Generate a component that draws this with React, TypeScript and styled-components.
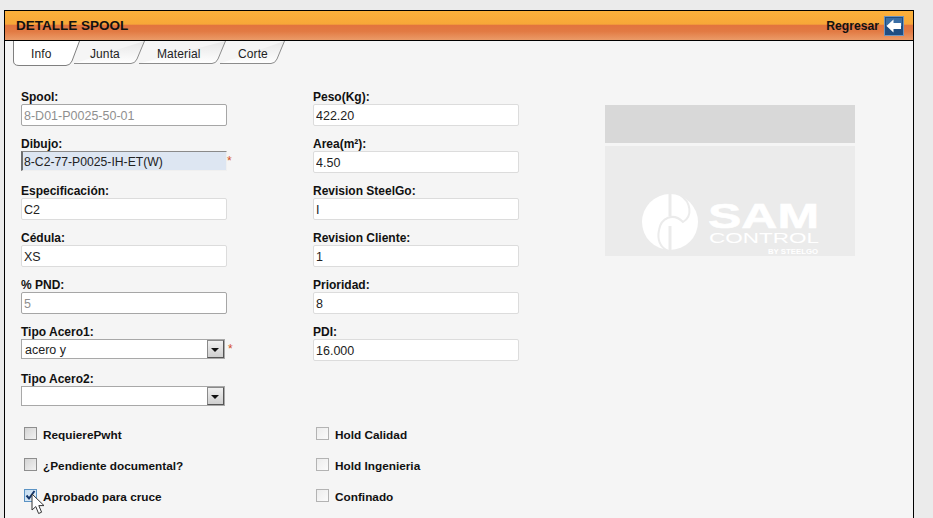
import { createGlobalStyle } from "styled-components";
import styled from "styled-components";

const GlobalStyle = createGlobalStyle`
  html, body {
    margin: 0;
    height: 518px;
    overflow: hidden;
    background: #ebebeb;
    font-family: "Liberation Sans", Arial, sans-serif;
  }
`;

const leftFields = [
  { label: "Spool:", value: "8-D01-P0025-50-01", disabled: true },
  { label: "Dibujo:", value: "8-C2-77-P0025-IH-ET(W)", focused: true, required: true },
  { label: "Especificación:", value: "C2" },
  { label: "Cédula:", value: "XS" },
  { label: "% PND:", value: "5", disabled: true },
];

const rightFields = [
  { label: "Peso(Kg):", value: "422.20" },
  { label: "Area(m²):", value: "4.50" },
  { label: "Revision SteelGo:", value: "I" },
  { label: "Revision Cliente:", value: "1" },
  { label: "Prioridad:", value: "8" },
  { label: "PDI:", value: "16.000" },
];

type TabInfo = { name: string; width: number; inset: number; active?: boolean };
const tabs: TabInfo[] = [
  { name: "Info", width: 67, inset: 18, active: true },
  { name: "Junta", width: 73, inset: 18 },
  { name: "Material", width: 89, inset: 20 },
  { name: "Corte", width: 67, inset: 20 },
];

const TabShape = ({ width, active }: { width: number; active?: boolean }) => {
  const bottom = active ? 25 : 23;
  const left = active
    ? `M0.5 0 V${bottom - 5} Q0.5 ${bottom - 0.5} 6 ${bottom - 0.5}`
    : `M2 ${bottom - 0.5} H6`;
  const d = `${left} H${width - 14} Q${width - 10} ${bottom - 0.5} ${width - 8} ${bottom - 5} L${width - 0.5} 0`;
  return (
    <TabSvg width={width} height={25} viewBox={`0 0 ${width} 25`}>
      <defs>
        <linearGradient id="tabOff" x1="0" y1="0" x2="0" y2="1">
          <stop offset="0" stopColor="#e6e6e6" />
          <stop offset="1" stopColor="#ffffff" />
        </linearGradient>
      </defs>
      <path d={`${d} Z`} fill={active ? "#ffffff" : "url(#tabOff)"} stroke="none" />
      <path d={d} fill="none" stroke={active ? "#7f7f7f" : "#8c8c8c"} strokeWidth="1" />
    </TabSvg>
  );
};

const App = () => {
  return (
    <>
      <GlobalStyle />
      <Panel>
        <Header>
          <Title>DETALLE SPOOL</Title>
          <BackLink>
            Regresar
            <BackIcon width="20" height="20" viewBox="0 0 20 20">
              <rect x="0.5" y="0.5" width="19" height="19" fill="#1f4d82" stroke="#6f94bd" />
              <rect x="2" y="2" width="16" height="8" fill="#3a6ea5" />
              <path d="M2.5 10 L9.5 3.5 V7 H17 V13 H9.5 V16.5 Z" fill="#ffffff" />
            </BackIcon>
          </BackLink>
        </Header>
        <TabStrip>
          {tabs.map((tab) => (
            <Tab key={tab.name} $width={tab.width} $active={tab.active}>
              <TabShape width={tab.width} active={tab.active} />
              <TabLabel $inset={tab.inset}>{tab.name}</TabLabel>
            </Tab>
          ))}
        </TabStrip>
        <Content>
          <Column>
            {leftFields.map((f) => (
              <Field key={f.label}>
                <Label>{f.label}</Label>
                <InputRow>
                  <TextInput
                    readOnly
                    value={f.value}
                    $disabled={f.disabled}
                    $focused={f.focused}
                  />
                  {f.required && <Required>*</Required>}
                </InputRow>
              </Field>
            ))}
            <Field>
              <Label>Tipo Acero1:</Label>
              <InputRow>
                <Combo>
                  <ComboText>acero y</ComboText>
                  <ComboButton />
                </Combo>
                <Required $gap={3}>*</Required>
              </InputRow>
            </Field>
            <Field>
              <Label>Tipo Acero2:</Label>
              <InputRow>
                <Combo>
                  <ComboText />
                  <ComboButton />
                </Combo>
              </InputRow>
            </Field>
            <Checks>
              <CheckRow>
                <CheckBox />
                <CheckLabel>RequierePwht</CheckLabel>
              </CheckRow>
              <CheckRow>
                <CheckBox />
                <CheckLabel>¿Pendiente documental?</CheckLabel>
              </CheckRow>
              <CheckRow>
                <CheckBox $checked>
                  <svg width="13" height="13" viewBox="0 0 13 13">
                    <path d="M2.5 6.5 L5 9.5 L10.5 2" fill="none" stroke="#15366b" strokeWidth="2" />
                  </svg>
                </CheckBox>
                <CheckLabel>Aprobado para cruce</CheckLabel>
                <Cursor width="18" height="24" viewBox="0 0 18 24">
                  <path
                    d="M1 1 V17 L4.8 13.6 L7.6 20.5 L10.6 19.2 L7.8 12.6 H13 Z"
                    fill="#ffffff"
                    stroke="#333333"
                    strokeWidth="1"
                  />
                </Cursor>
              </CheckRow>
            </Checks>
          </Column>
          <Column>
            {rightFields.map((f) => (
              <Field key={f.label}>
                <Label>{f.label}</Label>
                <InputRow>
                  <TextInput readOnly value={f.value} />
                </InputRow>
              </Field>
            ))}
            <RightChecks>
              <CheckRow>
                <CheckBox $plain />
                <CheckLabel>Hold Calidad</CheckLabel>
              </CheckRow>
              <CheckRow>
                <CheckBox $plain />
                <CheckLabel>Hold Ingenieria</CheckLabel>
              </CheckRow>
              <CheckRow>
                <CheckBox $plain />
                <CheckLabel>Confinado</CheckLabel>
              </CheckRow>
            </RightChecks>
          </Column>
          <Picture>
            <PictureTop />
            <Logo width="250" height="110" viewBox="0 0 250 110">
              <circle cx="65" cy="76" r="28" fill="#ffffff" />
              <path d="M65 47 V70 M65 80 V105" stroke="#ebebeb" strokeWidth="3" />
              <path
                d="M75 49 C86 56 88 70 78 76 C68 66 56 72 54 84 C52 94 55 101 63 105"
                fill="none"
                stroke="#ebebeb"
                strokeWidth="2"
              />
              <text
                x="103"
                y="82"
                fill="#ffffff"
                stroke="#ffffff"
                strokeWidth="0.6"
                fontFamily="Liberation Sans, Arial, sans-serif"
                fontWeight="700"
                fontSize="35"
                textLength="111"
                lengthAdjust="spacingAndGlyphs"
              >
                SAM
              </text>
              <text
                x="104"
                y="97"
                fill="#ffffff"
                fontFamily="Liberation Sans, Arial, sans-serif"
                fontSize="15"
                textLength="110"
                lengthAdjust="spacingAndGlyphs"
              >
                CONTROL
              </text>
              <text
                x="163"
                y="108"
                fill="#ffffff"
                fontFamily="Liberation Sans, Arial, sans-serif"
                fontWeight="700"
                fontSize="8"
                textLength="50"
                lengthAdjust="spacingAndGlyphs"
              >
                BY STEELGO
              </text>
            </Logo>
          </Picture>
        </Content>
      </Panel>
    </>
  );
};
export default App;

const Panel = styled.div`
  position: relative;
  box-sizing: border-box;
  width: 910px;
  height: 540px;
  margin: 10px 0 0 4px;
  border: 1px solid #000;
  background: #f5f5f5;
`;

const Header = styled.div`
  box-sizing: border-box;
  display: flex;
  align-items: center;
  justify-content: space-between;
  height: 30px;
  padding: 0 9px 0 11px;
  border-bottom: 1px solid #000;
  background: linear-gradient(
    to bottom,
    #fbb03b 0%,
    #f7a738 45%,
    #e2743e 50%,
    #e27a43 70%,
    #eb9b68 100%
  );
`;

const Title = styled.div`
  font-size: 13.5px;
  font-weight: 700;
  color: #111;
`;

const BackLink = styled.div`
  display: flex;
  align-items: center;
  gap: 5px;
  font-size: 12.2px;
  font-weight: 700;
  color: #111;
`;

const BackIcon = styled.svg`
  display: block;
`;

const TabStrip = styled.div`
  display: flex;
  height: 25px;
  padding-left: 8px;
`;

const Tab = styled.div<{ $width: number; $active?: boolean }>`
  position: relative;
  width: ${(p) => p.$width}px;
  height: 25px;
  margin-right: -8px;
  z-index: ${(p) => (p.$active ? 2 : 1)};
`;

const TabSvg = styled.svg`
  position: absolute;
  left: 0;
  top: 0;
`;

const TabLabel = styled.div<{ $inset: number }>`
  position: relative;
  padding: 6px 0 0 ${(p) => p.$inset}px;
  font-size: 12px;
  letter-spacing: 0.1px;
  color: #222;
`;

const Content = styled.div`
  display: grid;
  grid-template-columns: 292px 292px 250px;
  padding: 23px 0 0 16px;
`;

const Column = styled.div`
  display: flex;
  flex-direction: column;
`;

const Field = styled.div`
  display: flex;
  flex-direction: column;
  height: 47px;
`;

const Label = styled.label`
  height: 14px;
  padding-top: 1px;
  font-size: 12px;
  line-height: 15px;
  font-weight: 700;
  color: #111;
`;

const InputRow = styled.div`
  display: flex;
  align-items: flex-start;
`;

const TextInput = styled.input<{ $disabled?: boolean; $focused?: boolean }>`
  box-sizing: border-box;
  width: 206px;
  height: 22px;
  padding: 2px 2px 0;
  font-family: "Liberation Sans", Arial, sans-serif;
  font-size: 12.5px;
  color: ${(p) => (p.$disabled ? "#8f8f8f" : "#222")};
  background: ${(p) => (p.$focused ? "#dde6f2" : "#fff")};
  border: 1px solid ${(p) => (p.$disabled ? "#a6a6a6" : "#dcdcdc")};
  border-radius: 2px;
  outline: none;
  ${(p) =>
    p.$focused &&
    `
    height: 20px;
    font-size: 12.2px;
    border-radius: 0;
    border-color: #8a8a8a #f0f0f0 #f0f0f0 #6e6e6e;
    border-width: 1px 1px 1px 2px;
    padding-left: 1px;
  `}
`;

const Required = styled.span<{ $gap?: number }>`
  margin-left: ${(p) => p.$gap ?? 0}px;
  font-size: 12px;
  line-height: 20px;
  color: #d4511e;
`;

const Combo = styled.div`
  box-sizing: border-box;
  display: flex;
  width: 204px;
  height: 20px;
  border: 1px solid #a8a8a8;
  background: #fff;
`;

const ComboText = styled.div`
  flex: 1;
  padding-left: 3px;
  font-size: 12.5px;
  line-height: 20px;
  color: #222;
`;

const ComboButton = styled.div`
  position: relative;
  box-sizing: border-box;
  width: 17px;
  border: 1px solid #555;
  border-color: #8a8a8a #555 #555 #8a8a8a;
  background: linear-gradient(to bottom, #f0f0f0, #cfcfcf);

  &::after {
    content: "";
    position: absolute;
    left: 3px;
    top: 7px;
    border-style: solid;
    border-width: 4px 4px 0 4px;
    border-color: #111 transparent transparent transparent;
  }
`;

const Checks = styled.div`
  display: flex;
  flex-direction: column;
  gap: 11px;
  margin-top: 7px;
`;

const RightChecks = styled(Checks)`
  margin-top: 54px;
`;

const CheckRow = styled.div`
  position: relative;
  display: flex;
  align-items: center;
  gap: 6px;
  height: 20px;
  padding-left: 3px;
`;

const CheckBox = styled.div<{ $checked?: boolean; $plain?: boolean }>`
  box-sizing: border-box;
  display: flex;
  width: 13px;
  height: 13px;
  margin-top: -3px;
  border: 1px solid ${(p) => (p.$checked ? "#5b93c4" : p.$plain ? "#b3b3b3" : "#8e8e8e")};
  background: ${(p) =>
    p.$checked
      ? "linear-gradient(135deg, #c4dcf0, #e6f1fa)"
      : p.$plain
        ? "linear-gradient(135deg, #ececec, #fbfbfb)"
        : "linear-gradient(135deg, #d4d4d4, #f2f2f2)"};

  svg {
    margin: -1px;
  }
`;

const CheckLabel = styled.span`
  font-size: 11.8px;
  font-weight: 700;
  color: #111;
`;

const Cursor = styled.svg`
  position: absolute;
  left: 10px;
  top: 6px;
`;

const Picture = styled.div`
  display: flex;
  flex-direction: column;
  gap: 3px;
  padding-top: 16px;
`;

const PictureTop = styled.div`
  height: 38px;
  background: #d8d8d8;
`;

const Logo = styled.svg`
  display: block;
  background: #ebebeb;
`;
